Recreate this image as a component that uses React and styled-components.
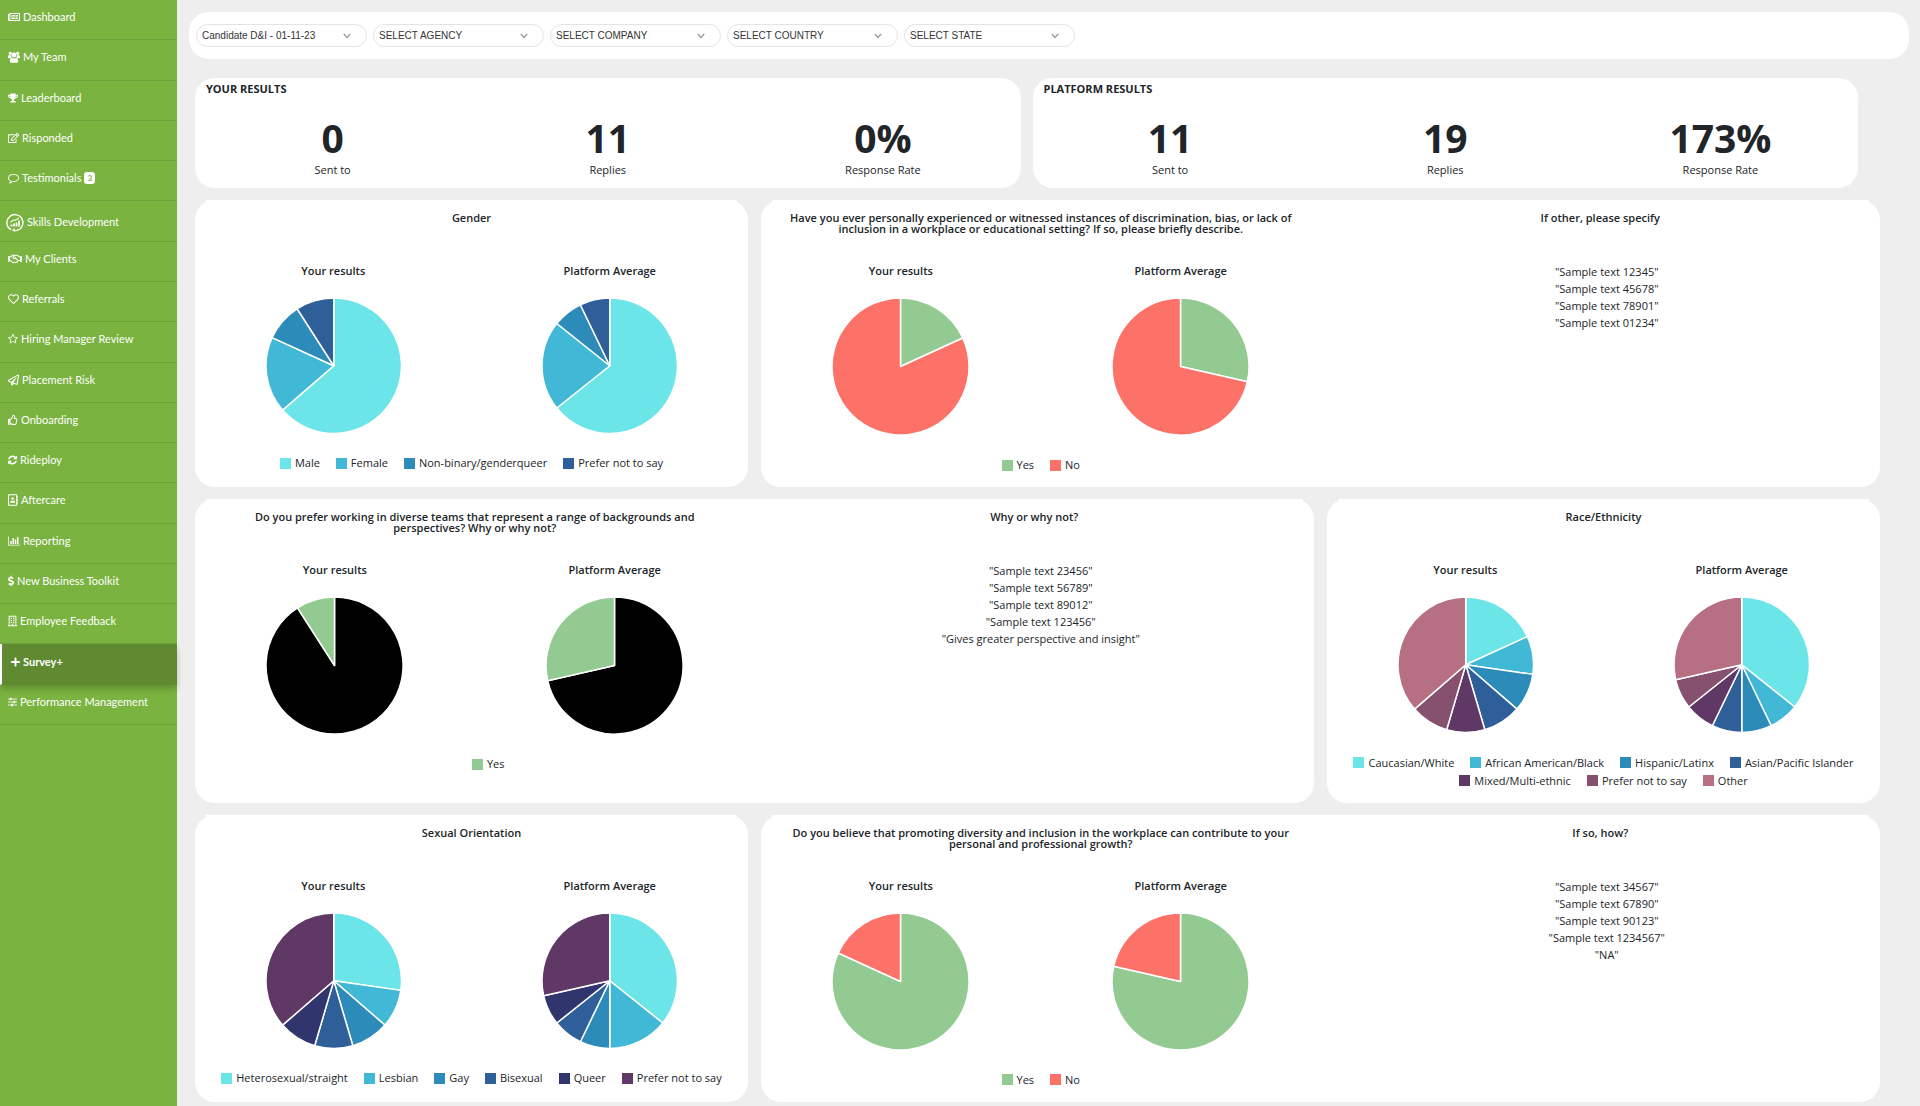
import React from "react";
import styled, { createGlobalStyle, css } from "styled-components";
import {
  FaRegNewspaper, FaTrophy, FaRegEdit, FaRegHandshake, FaRegHeart,
  FaRegPaperPlane, FaRegThumbsUp, FaRegAddressBook, FaDollarSign,
  FaRegBuilding, FaPlus,
} from "react-icons/fa";

const GlobalStyle = createGlobalStyle`
  *, *::before, *::after { box-sizing: border-box; }
  body {
    margin: 0;
    background: #eeeeee;
    color: #212529;
    font-family: "Open Sans", "Noto Sans", sans-serif;
    font-size: 11px;
  }
`;

const Page = styled.div`
  display: flex;
  min-height: 100vh;
`;

const Sidebar = styled.nav`
  flex: 0 0 177px;
  background: #7ab340;
  font-family: Lato, "Open Sans", sans-serif;
`;

const Menu = styled.ul`
  display: grid;
  grid-template-rows: repeat(18, 1fr);
  height: 725px;
  margin: 0;
  padding: 0;
  list-style: none;
`;

const MenuLink = styled.a`
  display: flex;
  align-items: center;
  gap: 3px;
  height: 100%;
  padding: 0 8px 5px;
  border-bottom: 1px solid #6ca038;
  color: #ffffff;
  font-size: 11px;
  line-height: 14px;
  text-decoration: none;
  white-space: nowrap;

  svg {
    flex: none;
    width: ${(p) => p.$iconWidth}px;
    height: ${(p) => (p.$large ? 19 : 12)}px;
  }

  ${(p) => p.$large && css`
    padding: 2px 6px 0;
  `}

  ${(p) => p.$active && css`
    position: relative;
    border-left: 2px solid #ffffff;
    border-bottom-color: #5f8a32;
    padding-left: 9px;
    background: #5f8a32;
    font-weight: 700;
    box-shadow: 0 4px 6px rgba(0, 0, 0, 0.2);
  `}
`;

const Badge = styled.span`
  padding: 0 3px;
  border-radius: 3px;
  background: #ffffff;
  color: #7ab340;
  font-size: 8px;
  font-weight: 700;
  line-height: 12px;
`;

const Main = styled.main`
  flex: 1;
  min-width: 0;
  padding: 12px 11px 3px 12px;
`;

const FilterBar = styled.form`
  display: flex;
  gap: 6px;
  padding: 12px 7px;
  border-radius: 20px;
  background: #ffffff;
`;

const Filter = styled.label`
  position: relative;
  flex: 0 1 171px;

  svg {
    position: absolute;
    top: 9px;
    right: 16px;
    pointer-events: none;
  }
`;

const Select = styled.select`
  display: block;
  width: 100%;
  height: 23px;
  padding: 0 5px;
  appearance: none;
  border: 1px solid #e4e4e4;
  border-radius: 12px;
  background: #ffffff;
  color: #333333;
  font-family: "Liberation Sans", Arial, sans-serif;
  font-size: 10px;
`;

const StatsRow = styled.div`
  display: grid;
  grid-template-columns: 1fr 1fr;
  gap: 12px;
  padding: 19px 51px 12px 6px;
`;

const StatsCard = styled.section`
  height: 110px;
  padding-top: 4px;
  border-radius: 20px;
  background: #ffffff;
`;

const StatsTitle = styled.h2`
  margin: 0 0 19px;
  padding: 0 11px;
  font-size: 11px;
  font-weight: 700;
  line-height: 13px;
`;

const StatsList = styled.dl`
  display: grid;
  grid-template-columns: repeat(3, 1fr);
  margin: 0;
  text-align: center;
`;

const Stat = styled.div`
  display: flex;
  flex-direction: column-reverse;

  dt { font-size: 11px; line-height: 16px; }
  dd {
    margin: 0;
    font-size: 39px;
    font-weight: 700;
    line-height: 48px;
  }
`;

const ChartGrid = styled.div`
  display: grid;
  grid-template-columns: repeat(3, 1fr);
  gap: 12px 13px;
  padding: 0 29px 0 6px;
`;

const Card = styled.section`
  display: grid;
  grid-template-columns: ${(p) => (p.$wide ? "1fr 1fr" : "1fr")};
  grid-column: span ${(p) => (p.$wide ? 2 : 1)};
  align-items: start;
  padding-bottom: 13px;
  border-radius: 20px;
  background: #ffffff;
  text-align: center;
`;

const CardTitle = styled.h3`
  min-height: 34px;
  margin: 0 11px;
  padding-top: 12px;
  background: #ffffff;
  font-size: 11px;
  font-weight: 600;
  line-height: 11px;
  white-space: pre-line;
`;

const Pies = styled.div`
  display: grid;
  grid-template-columns: 1fr 1fr;
  padding-top: 31px;
`;

const PieFigure = styled.figure`
  display: flex;
  flex-direction: column;
  align-items: center;
  gap: 22px;
  margin: 0;

  figcaption { font-weight: 600; line-height: 11px; }
  svg { display: block; width: 49%; }
`;

const Legend = styled.ul`
  display: flex;
  flex-wrap: wrap;
  justify-content: center;
  column-gap: 16px;
  margin: 21px 11px 0;
  padding: 0;
  list-style: none;
`;

const LegendItem = styled.li`
  display: flex;
  align-items: center;
  gap: 4px;
  line-height: 18px;

  &::before {
    content: "";
    width: 11px;
    height: 11px;
    background: ${(p) => p.$color};
  }
`;

const Answers = styled.ul`
  margin: 0;
  padding: 29px 0 0 13px;
  list-style: none;
  line-height: 17px;
`;

const UsersIcon = () => (
  <svg viewBox="0 0 23 22" fill="#fff">
    <circle cx="4.5" cy="4" r="3.1" />
    <circle cx="18.5" cy="4" r="3.1" />
    <circle cx="11.5" cy="7.2" r="4.6" />
    <path d="M0 13V10q0-3 2.4-3 1.6 1 3.6.8-.2 2.600 1.400 4.200-1.800 0-3 1.600H1Q0 13.600 0 13z" />
    <path d="M23 13V10q0-3-2.400-3-1.600 1-3.600.8.2 2.600-1.400 4.200 1.800 0 3 1.600H22q1-.1 1-.6z" />
    <path d="M3.500 19q0-6.800 4-6.800 1.800 1.500 4 1.500t4-1.500q4 0 4 6.800 0 3-3 3h-10q-3 0-3-3z" />
  </svg>
);

const CommentIcon = () => (
  <svg viewBox="0 0 1792 1792" fill="#fff">
    <path d="M896 384q-204 0-381.500 69.500t-282 187.500-104.500 255q0 112 71.500 213.500t201.500 175.500l87 50-27 96q-24 91-70 172 152-63 275-171l43-38 57 6q69 8 130 8 204 0 381.500-69.500t282-187.500 104.500-255-104.500-255-282-187.500-381.500-69.500zm896 512q0 174-120 321.500t-326 233-450 85.500q-70 0-145-8-198 175-460 242-49 14-114 22h-5q-15 0-27-10.500t-16-27.500v-1q-3-4-.5-12t2-10 4.500-9.500l6-9 7-8.500 8-9q7-8 31-34.500t34.500-38 31-39.500 32.500-51 27-59 26-76q-157-89-247.500-220t-90.500-281q0-174 120-321.500t326-233 450-85.500 450 85.500 326 233 120 321.500z" />
  </svg>
);

const StarIcon = () => (
  <svg viewBox="64 0 1664 1792" fill="#fff">
    <path d="M1201 1004l306-297-422-62-189-382-189 382-422 62 306 297-73 421 378-199 377 199zm527-357q0 22-26 48l-363 354 86 500q1 7 1 20 0 50-41 50-19 0-40-12l-449-236-449 236q-22 12-40 12-21 0-31.500-14.500t-10.500-35.500q0-6 2-20l86-500-364-354q-25-27-25-48 0-37 56-46l502-73 225-455q19-41 49-41t49 41l225 455 502 73q56 9 56 46z" />
  </svg>
);

const RefreshIcon = () => (
  <svg viewBox="128 0 1536 1792" fill="#fff">
    <path d="M1639 1056q0 5-1 7-64 268-268 434.500t-478 166.500q-146 0-282.500-55t-243.500-157l-129 129q-19 19-45 19t-45-19-19-45v-448q0-26 19-45t45-19h448q26 0 45 19t19 45-19 45l-137 137q71 66 161 102t187 36q134 0 250-65t186-179q11-17 53-117 8-23 30-23h192q13 0 22.500 9.500t9.500 22.500zm25-800v448q0 26-19 45t-45 19h-448q-26 0-45-19t-19-45 19-45l138-138q-148-137-349-137-134 0-250 65t-186 179q-11 17-53 117-8 23-30 23h-199q-13 0-22.500-9.500t-9.500-22.500v-7q65-268 270-434.500t480-166.500q146 0 284 55.500t245 156.500l130-129q19-19 45-19t45 19 19 45z" />
  </svg>
);

const BarsIcon = () => (
  <svg viewBox="0 0 2048 1792" fill="#fff">
    <path d="M640 896v512h-256v-512h256zm384-512v1024h-256v-1024h256zm1024 1152v128h-2048v-1536h128v1408h1920zm-640-896v768h-256v-768h256zm384-384v1152h-256v-1152h256z" />
  </svg>
);

const SkillsIcon = () => (
  <svg viewBox="0 0 18 19" fill="none" stroke="#fff">
    <path d="M5.200 16.700A8 8 0 1 1 9 17.600" strokeWidth="1.4" />
    <path d="M8.500 15.600 6.200 17.400l2.600 1.200z" fill="#fff" strokeWidth="0.4" />
    <path d="M5.500 13.500v-2M8 13.500v-3M10.500 13.500v-4M13 13.500v-6" strokeWidth="1.7" />
    <path d="M4.500 9.200 8 6.800l1.400.6L13 4.900" strokeWidth="1.1" />
  </svg>
);

const SlidersIcon = () => (
  <svg viewBox="0 0 10 10" fill="none" stroke="#fff">
    <path d="M0 1.700h10M0 5h10M0 8.300h10" strokeWidth="0.9" />
    <path d="M3 .4v2.600M7 3.700v2.600M4.500 7v2.600" strokeWidth="1.8" />
  </svg>
);

const Chevron = () => (
  <svg width="8" height="6" viewBox="0 0 8 6" fill="none" stroke="#999" strokeWidth="1.4">
    <path d="m.8.9 3.200 3.600L7.200.9" />
  </svg>
);

const AQUA = "#6ce5e8";
const SKY = "#41b8d5";
const BLUE = "#2d8bba";
const NAVY = "#2f5f98";
const INDIGO = "#31356e";
const PLUM = "#5f3866";
const MAUVE = "#86506f";
const ROSE = "#b77083";
const GREEN = "#92ca92";
const RED = "#fd7268";

function Pie({ title, values, colors }) {
  const total = values.reduce((a, b) => a + b, 0);
  const point = (v) => {
    const a = (v / total) * Math.PI * 2;
    return `${68 + 68 * Math.sin(a)} ${68 - 68 * Math.cos(a)}`;
  };
  let sum = 0;
  return (
    <PieFigure>
      <figcaption>{title}</figcaption>
      <svg viewBox="0 0 136 136" role="img" aria-label={title}>
        {values.map((v, i) => {
          const from = sum;
          sum += v;
          return (
            <path
              key={i}
              d={`M68 68 L${point(from)} A68 68 0 ${v / total > 0.5 ? 1 : 0} 1 ${point(sum)} Z`}
              fill={colors[i]}
              stroke="#fff"
              strokeWidth="1.5"
              strokeLinejoin="round"
            />
          );
        })}
      </svg>
    </PieFigure>
  );
}

function ChartCard({ title, yours, platform, colors, legend, answersTitle, answers }) {
  return (
    <Card $wide={!!answers}>
      <div>
        <CardTitle>{title}</CardTitle>
        <Pies>
          <Pie title="Your results" values={yours} colors={colors} />
          <Pie title="Platform Average" values={platform} colors={colors} />
        </Pies>
        <Legend>
          {legend.map(([label, color], i) => (
            <LegendItem key={i} $color={color}>{label}</LegendItem>
          ))}
        </Legend>
      </div>
      {answers && (
        <div>
          <CardTitle>{answersTitle}</CardTitle>
          <Answers>
            {answers.map((a) => <li key={a}>{`"${a}"`}</li>)}
          </Answers>
        </div>
      )}
    </Card>
  );
}

const MENU = [
  ["Dashboard", <FaRegNewspaper />, 12],
  ["My Team", <UsersIcon />, 12],
  ["Leaderboard", <FaTrophy />, 10],
  ["Risponded", <FaRegEdit />, 11],
  ["Testimonials", <CommentIcon />, 11, { badge: 3 }],
  ["Skills Development", <SkillsIcon />, 18, { large: true }],
  ["My Clients", <FaRegHandshake />, 14],
  ["Referrals", <FaRegHeart />, 11],
  ["Hiring Manager Review", <StarIcon />, 10],
  ["Placement Risk", <FaRegPaperPlane />, 11],
  ["Onboarding", <FaRegThumbsUp />, 10],
  ["Rideploy", <RefreshIcon />, 9],
  ["Aftercare", <FaRegAddressBook />, 10],
  ["Reporting", <BarsIcon />, 12],
  ["New Business Toolkit", <FaDollarSign />, 6],
  ["Employee Feedback", <FaRegBuilding />, 9],
  ["Survey+", <FaPlus />, 9, { active: true }],
  ["Performance Management", <SlidersIcon />, 9],
];

const FILTERS = [
  ["Survey", "Candidate D&I - 01-11-23"],
  ["Agency", "SELECT AGENCY"],
  ["Company", "SELECT COMPANY"],
  ["Country", "SELECT COUNTRY"],
  ["State", "SELECT STATE"],
];

const STATS = [
  ["YOUR RESULTS", [["Sent to", "0"], ["Replies", "11"], ["Response Rate", "0%"]]],
  ["PLATFORM RESULTS", [["Sent to", "11"], ["Replies", "19"], ["Response Rate", "173%"]]],
];

const CHARTS = [
  {
    title: "Gender",
    yours: [7, 2, 1, 1],
    platform: [9, 3, 1, 1],
    colors: [AQUA, SKY, BLUE, NAVY],
    legend: [["Male", AQUA], ["Female", SKY], ["Non-binary/genderqueer", BLUE], ["Prefer not to say", NAVY]],
  },
  {
    title: "Have you ever personally experienced or witnessed instances of discrimination, bias, or lack of\ninclusion in a workplace or educational setting? If so, please briefly describe.",
    yours: [2, 9],
    platform: [4, 10],
    colors: [GREEN, RED],
    legend: [["Yes", GREEN], ["No", RED]],
    answersTitle: "If other, please specify",
    answers: ["Sample text 12345", "Sample text 45678", "Sample text 78901", "Sample text 01234"],
  },
  {
    title: "Do you prefer working in diverse teams that represent a range of backgrounds and\nperspectives? Why or why not?",
    yours: [10, 1],
    platform: [10, 4],
    colors: ["#000000", GREEN],
    legend: [["", "transparent"], ["Yes", GREEN]],
    answersTitle: "Why or why not?",
    answers: ["Sample text 23456", "Sample text 56789", "Sample text 89012", "Sample text 123456", "Gives greater perspective and insight"],
  },
  {
    title: "Race/Ethnicity",
    yours: [2, 1, 1, 1, 1, 1, 4],
    platform: [5, 1, 1, 1, 1, 1, 4],
    colors: [AQUA, SKY, BLUE, NAVY, PLUM, MAUVE, ROSE],
    legend: [
      ["Caucasian/White", AQUA], ["African American/Black", SKY], ["Hispanic/Latinx", BLUE],
      ["Asian/Pacific Islander", NAVY], ["Mixed/Multi-ethnic", PLUM], ["Prefer not to say", MAUVE], ["Other", ROSE],
    ],
  },
  {
    title: "Sexual Orientation",
    yours: [3, 1, 1, 1, 1, 4],
    platform: [5, 2, 1, 1, 1, 4],
    colors: [AQUA, SKY, BLUE, NAVY, INDIGO, PLUM],
    legend: [
      ["Heterosexual/straight", AQUA], ["Lesbian", SKY], ["Gay", BLUE],
      ["Bisexual", NAVY], ["Queer", INDIGO], ["Prefer not to say", PLUM],
    ],
  },
  {
    title: "Do you believe that promoting diversity and inclusion in the workplace can contribute to your\npersonal and professional growth?",
    yours: [9, 2],
    platform: [11, 3],
    colors: [GREEN, RED],
    legend: [["Yes", GREEN], ["No", RED]],
    answersTitle: "If so, how?",
    answers: ["Sample text 34567", "Sample text 67890", "Sample text 90123", "Sample text 1234567", "NA"],
  },
];

export default function App() {
  return (
    <Page>
      <GlobalStyle />
      <Sidebar>
        <Menu>
          {MENU.map(([label, icon, iconWidth, opts = {}]) => (
            <li key={label}>
              <MenuLink href="#" $iconWidth={iconWidth} $active={opts.active} $large={opts.large}>
                {icon}
                <span>{label}</span>
                {opts.badge && <Badge>{opts.badge}</Badge>}
              </MenuLink>
            </li>
          ))}
        </Menu>
      </Sidebar>
      <Main>
        <FilterBar>
          {FILTERS.map(([name, value]) => (
            <Filter key={name}>
              <Select aria-label={name} defaultValue={value}>
                <option>{value}</option>
              </Select>
              <Chevron />
            </Filter>
          ))}
        </FilterBar>
        <StatsRow>
          {STATS.map(([title, stats]) => (
            <StatsCard key={title}>
              <StatsTitle>{title}</StatsTitle>
              <StatsList>
                {stats.map(([label, value]) => (
                  <Stat key={label}>
                    <dt>{label}</dt>
                    <dd>{value}</dd>
                  </Stat>
                ))}
              </StatsList>
            </StatsCard>
          ))}
        </StatsRow>
        <ChartGrid>
          {CHARTS.map((c) => <ChartCard key={c.title} {...c} />)}
        </ChartGrid>
      </Main>
    </Page>
  );
}
